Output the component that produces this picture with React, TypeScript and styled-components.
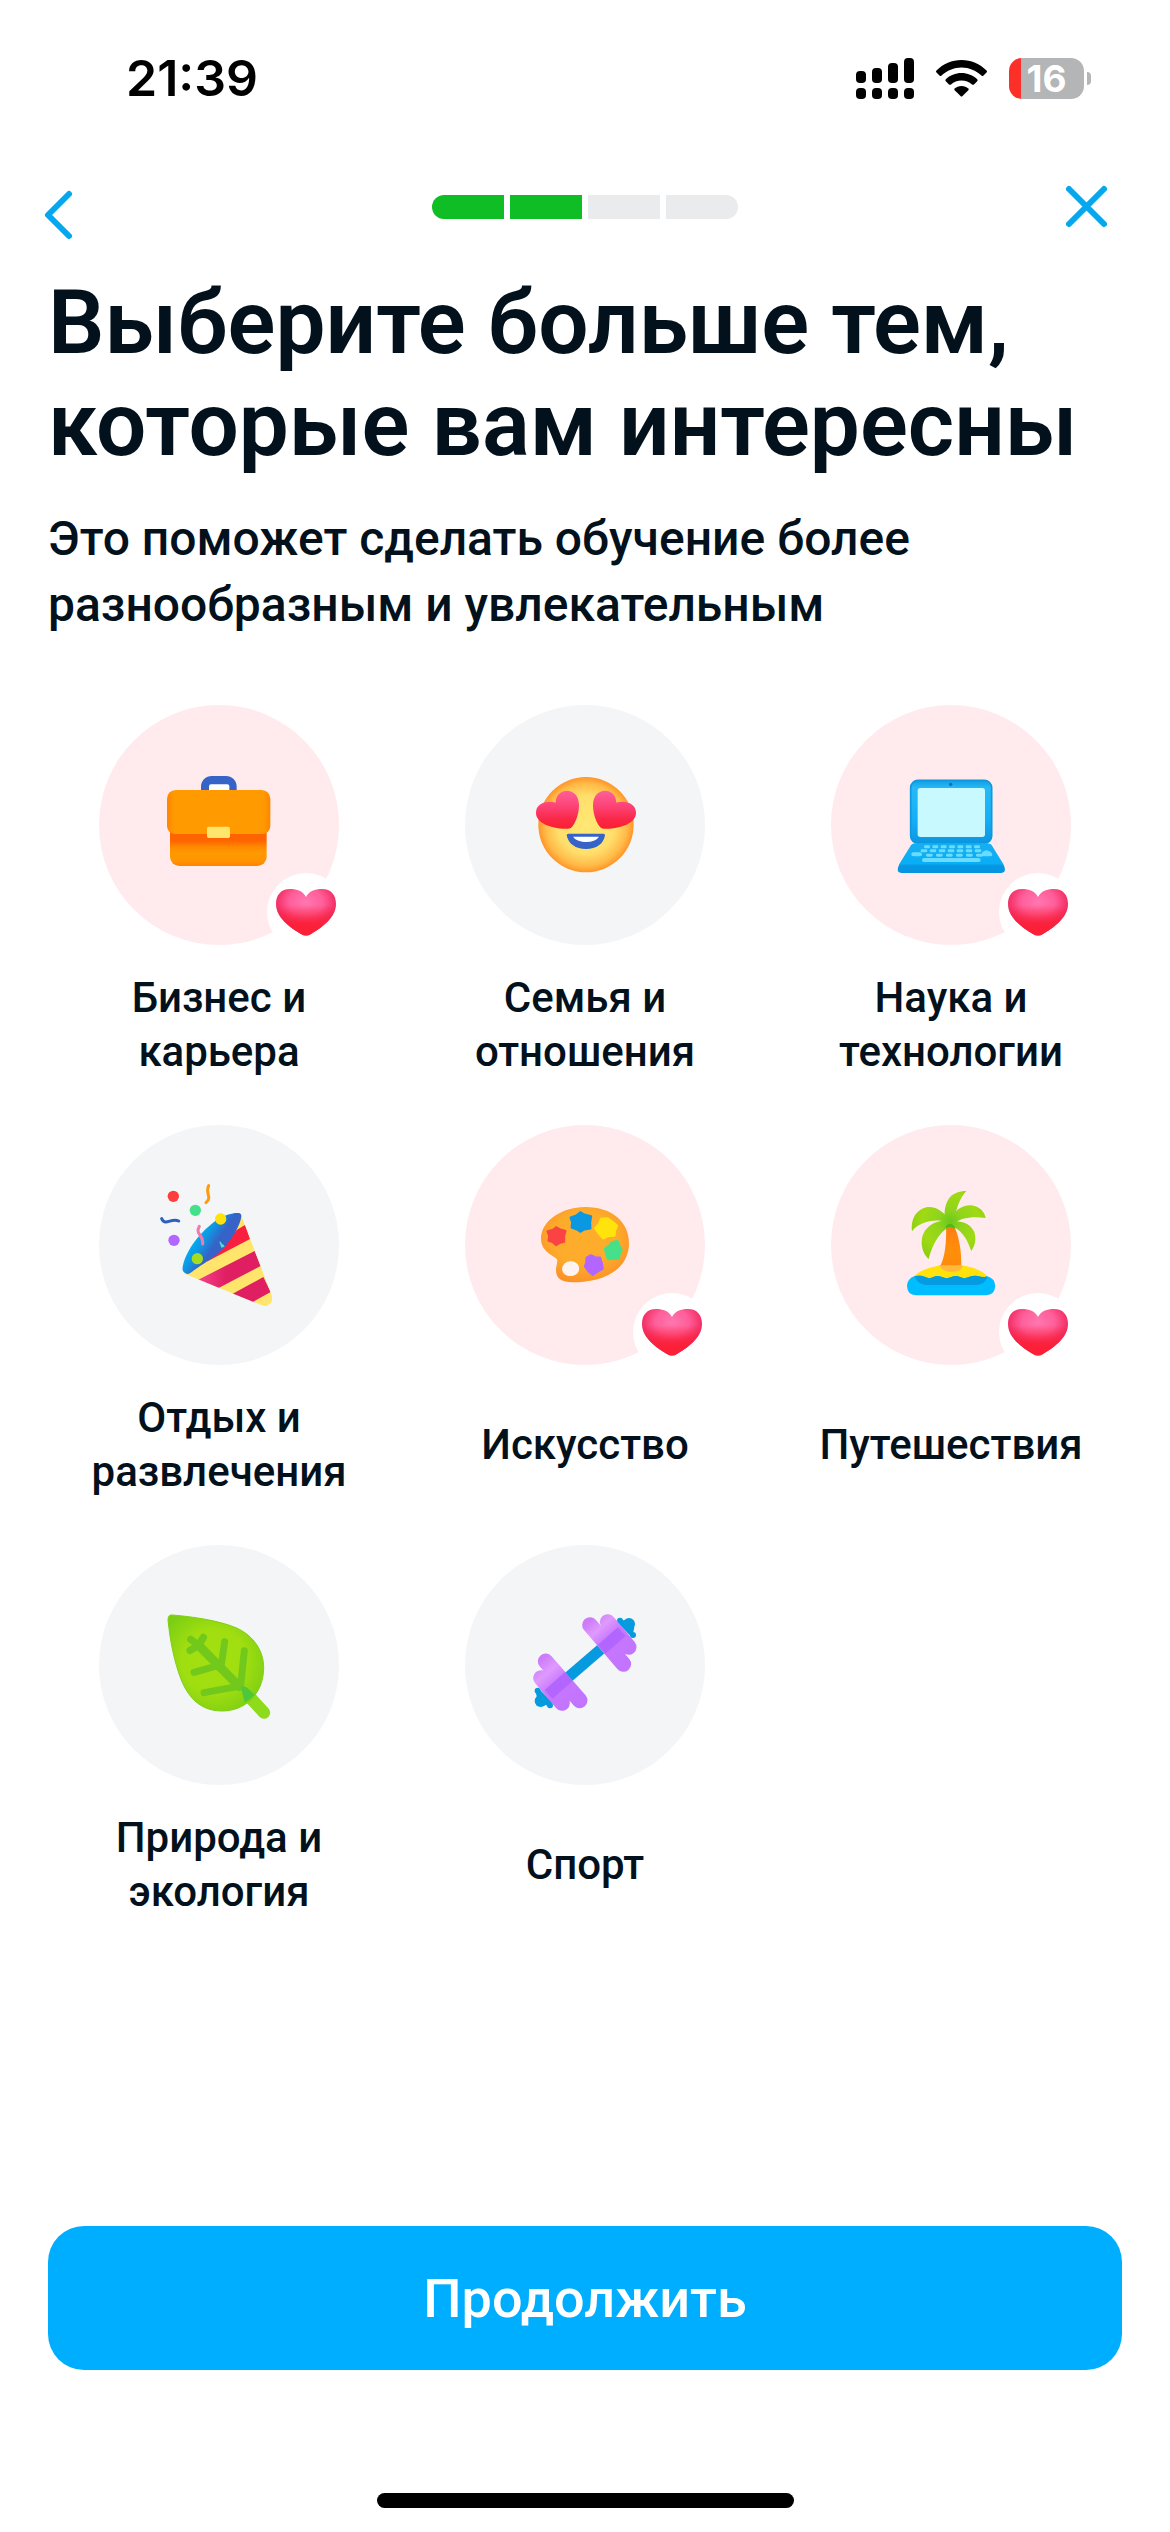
import React, { memo, useState } from "react";
import styled, { createGlobalStyle } from "styled-components";

interface ITopic {
    id: string;
    label: string;
    icon: React.ReactNode;
}

const BriefcaseIcon = () => (
    <svg viewBox="27 45 720 720" aria-hidden="true">
        <defs>
            <linearGradient id="caseTop" x1="0" x2="1" y1="0" y2="0">
                <stop offset="0" stopColor="#ff8500" />
                <stop offset="0.07" stopColor="#ff9a00" />
                <stop offset="0.93" stopColor="#ff9a00" />
                <stop offset="1" stopColor="#ff8500" />
            </linearGradient>
            <linearGradient id="caseBottom" x1="0" x2="0" y1="0" y2="1">
                <stop offset="0" stopColor="#ff6200" />
                <stop offset="0.4" stopColor="#ff6400" />
                <stop offset="0.56" stopColor="#ff8a00" />
                <stop offset="0.7" stopColor="#ff9a00" />
                <stop offset="0.88" stopColor="#ff9500" />
                <stop offset="1" stopColor="#ff8200" />
            </linearGradient>
        </defs>
        <path
            d="M333 304V290a32 32 0 0 1 32-32h43a32 32 0 0 1 32 32v14z"
            fill="#3563c8"
        />
        <path d="M357 300v-11q0-6 6-6h49q6 0 6 6v11z" fill="#fff" />
        <path
            d="M240 400H530V500a28 28 0 0 1-28 28H268a28 28 0 0 1-28-28z"
            fill="url(#caseBottom)"
        />
        <path
            d="M231 326a26 26 0 0 1 26-26h258a26 26 0 0 1 26 26v82a24 24 0 0 1-24 24H255a24 24 0 0 1-24-24z"
            fill="url(#caseTop)"
        />
        <rect x="351" y="410" width="69" height="34" rx="5" fill="#ffe56c" />
    </svg>
);

const LoveFaceIcon = () => (
    <svg viewBox="30 45 720 720" aria-hidden="true">
        <defs>
            <radialGradient id="face" cx="0.5" cy="0.5" r="0.5">
                <stop offset="0" stopColor="#ffe873" />
                <stop offset="0.6" stopColor="#ffdf6c" />
                <stop offset="0.86" stopColor="#ffbb49" />
                <stop offset="1" stopColor="#ff9527" />
            </radialGradient>
            <linearGradient id="eye" x1="0" x2="0" y1="0" y2="1">
                <stop offset="0" stopColor="#ff5f9a" />
                <stop offset="0.4" stopColor="#fc4476" />
                <stop offset="0.75" stopColor="#fa2747" />
                <stop offset="1" stopColor="#f9202f" />
            </linearGradient>
        </defs>
        <circle cx="393" cy="404" r="143" fill="url(#face)" />
        <path
            d="M302 338C303 290 372 288 372 346C372 374 360 402 350 412C346 417 334 417 322 416C288 413 243 400 243 368C243 340 276 330 302 338Z"
            fill="url(#eye)"
        />
        <path
            d="M484 338C483 290 414 288 414 346C414 374 426 402 436 412C440 417 452 417 464 416C498 413 543 400 543 368C543 340 510 330 484 338Z"
            fill="url(#eye)"
        />
        <path
            d="M340 431H445Q451 431 450 436C446 462 424 477 393 477C362 477 340 462 335 436Q335 431 340 431Z"
            fill="#3563c8"
        />
        <path
            d="M354 440H432C424 451 411 456 394 456C377 456 362 451 354 440Z"
            fill="#fff"
        />
    </svg>
);

const keyRows = [
    { y: 466, x: 312, w: 18, step: 25, count: 7 },
    { y: 478, x: 302, w: 20, step: 27, count: 7 },
    { y: 491, x: 318, w: 20, step: 30, count: 6 },
];

const LaptopIcon = () => (
    <svg viewBox="33 45 720 720" aria-hidden="true">
        <defs>
            <linearGradient id="lid" x1="0" x2="0" y1="0" y2="1">
                <stop offset="0" stopColor="#109ee2" />
                <stop offset="0.12" stopColor="#27b9f6" />
                <stop offset="0.6" stopColor="#16b0f6" />
                <stop offset="1" stopColor="#0b96e2" />
            </linearGradient>
            <linearGradient id="deck" x1="0" x2="0" y1="0" y2="1">
                <stop offset="0" stopColor="#18aef2" />
                <stop offset="0.68" stopColor="#08aef6" />
                <stop offset="0.76" stopColor="#0697e2" />
                <stop offset="1" stopColor="#0694e0" />
            </linearGradient>
        </defs>
        <rect x="272" y="271" width="243" height="189" rx="22" fill="url(#lid)" stroke="#0d98df" strokeWidth="5" />
        <rect x="293" y="294" width="202" height="147" rx="8" fill="#c7f9ff" />
        <circle cx="392" cy="283" r="5" fill="#1269b8" />
        <path
            d="M286 460H502Q512 460 518 470L550 522Q562 548 544 549H244Q226 548 238 522L270 470Q276 460 286 460Z"
            fill="url(#deck)"
        />
        <g fill="#69dcff">
            {keyRows.map((row) =>
                Array.from({ length: row.count }, (_, i) => (
                    <rect
                        key={`${row.y}-${i}`}
                        x={row.x + i * row.step}
                        y={row.y}
                        width={row.w}
                        height="9"
                        rx="4"
                    />
                ))
            )}
            <rect x="274" y="487" width="32" height="12" rx="6" />
            <path d="M484 499Q482 484 500 481Q514 484 517 494Q517 499 510 499Z" />
            <rect x="306" y="504" width="176" height="12" rx="6" />
        </g>
    </svg>
);

const PartyIcon = () => (
    <svg viewBox="27 45 720 720" aria-hidden="true">
        <defs>
            <linearGradient id="mouth" x1="320" x2="410" y1="370" y2="430" gradientUnits="userSpaceOnUse">
                <stop offset="0" stopColor="#00b0f6" />
                <stop offset="0.25" stopColor="#0c9be4" />
                <stop offset="0.6" stopColor="#3563c8" />
                <stop offset="1" stopColor="#3563c8" />
            </linearGradient>
            <linearGradient id="stripe" x1="330" x2="440" y1="0" y2="0" gradientUnits="userSpaceOnUse">
                <stop offset="0" stopColor="#f43f8c" />
                <stop offset="0.7" stopColor="#e01f62" />
                <stop offset="1" stopColor="#e01f62" />
            </linearGradient>
            <clipPath id="cone">
                <path d="M452 312L545 556Q550 572 540 581Q530 590 516 586L286 492Q370 440 400 400Q440 360 452 312Z" />
            </clipPath>
        </defs>
        <g clipPath="url(#cone)">
            <rect x="270" y="300" width="290" height="300" fill="#ffe56c" />
            <path d="M350 455L440 360L466 344L480 387Z" fill="#f9203f" />
            <path d="M300 522L494 423L512 468L370 542Z" fill="url(#stripe)" />
            <path d="M420 556L520 501L542 546L470 586Z" fill="#e01f62" />
        </g>
        <path
            d="M446 309Q454 310 454 318C452 344 424 396 382 432C352 456 322 472 300 490Q292 494 286 490Q274 484 279 466C290 420 330 364 384 328C408 313 432 307 446 309Z"
            fill="url(#mouth)"
        />
        <circle cx="250" cy="259" r="17" fill="#fc3f3d" />
        <circle cx="316" cy="301" r="17" fill="#45e08b" />
        <circle cx="252" cy="391" r="17" fill="#b266ff" />
        <circle cx="392" cy="327" r="17" fill="#ffe20c" />
        <circle cx="322" cy="446" r="17" fill="#a4dd20" />
        <g fill="none" strokeWidth="9" strokeLinecap="round">
            <path d="M356 227C344 250 368 262 348 278" stroke="#ff9a10" />
            <path d="M215 326C226 350 244 322 266 333" stroke="#2c5fbe" />
            <path d="M328 349C314 374 342 374 338 402" stroke="#ef7ab0" />
        </g>
        <path d="M388 394Q394 394 396 402Q402 402 404 410L394 413Q390 404 388 394Z" fill="#52dcd2" />
    </svg>
);

const PaletteIcon = () => (
    <svg viewBox="30 45 720 720" aria-hidden="true">
        <defs>
            <radialGradient id="board" cx="0.5" cy="0.42" r="0.6">
                <stop offset="0" stopColor="#feae2b" />
                <stop offset="0.6" stopColor="#fdab2b" />
                <stop offset="1" stopColor="#fb9128" />
            </radialGradient>
        </defs>
        <path
            fillRule="evenodd"
            d="M390 291C468 290 522 335 522 398C522 474 454 517 352 517C322 517 304 506 303 484C302 468 309 458 306 448C302 438 258 428 258 386C258 332 320 292 390 291ZM347 455C331 455 322 466 322 478C322 490 331 498 346 498C362 498 372 488 372 475C372 463 363 455 347 455Z"
            fill="url(#board)"
        />
        <ellipse cx="347" cy="476" rx="25" ry="22" fill="#fff3f2" />
        <g strokeWidth="7" strokeLinejoin="round">
            <path d="M303 352L314 358L331 363L327 379L327 395L313 399L303 405L293 396L281 392L283 378L278 364L294 360Z" fill="#fb4343" stroke="#fb4343" />
            <path d="M376 307L388 314L408 319L405 337L406 355L388 358L376 365L366 358L350 352L352 337L347 323L364 317Z" fill="#0a98e2" stroke="#0a98e2" />
            <path d="M458 325L470 334L486 347L480 361L478 377L459 378L444 385L434 373L420 355L432 343L438 327Z" fill="#ffe30c" stroke="#ffe30c" />
            <path d="M487 393L493 408L500 420L494 431L491 446L475 446L459 447L454 431L450 416L462 408L471 397Z" fill="#45e088" stroke="#45e088" />
            <path d="M408 436L420 442L435 443L440 459L443 476L430 483L413 494L400 483L390 469L394 459L395 443Z" fill="#b266ff" stroke="#b266ff" />
        </g>
    </svg>
);

const IslandIcon = () => (
    <svg viewBox="33 45 720 720" aria-hidden="true">
        <defs>
            <linearGradient id="trunk" x1="0" x2="0" y1="0" y2="1">
                <stop offset="0" stopColor="#ff7d14" />
                <stop offset="0.6" stopColor="#ff8f08" />
                <stop offset="1" stopColor="#ff8a0c" />
            </linearGradient>
            <radialGradient id="palm" cx="390" cy="335" r="120" gradientUnits="userSpaceOnUse">
                <stop offset="0" stopColor="#6cc81c" />
                <stop offset="0.3" stopColor="#8fd41c" />
                <stop offset="0.7" stopColor="#9fda14" />
                <stop offset="1" stopColor="#8ed010" />
            </radialGradient>
        </defs>
        <path d="M282 500C300 478 345 464 394 464C443 464 485 478 503 500L490 520H296Z" fill="#ffe20c" />
        <path d="M358 466Q392 461 428 467Q424 485 394 486Q364 485 358 466Z" fill="#ffb73c" />
        <path d="M378 352H404C420 388 424 430 424 466H362C374 440 380 400 378 352Z" fill="url(#trunk)" />
        <path
            d="M284 498Q300 494 316 501Q328 508 340 501Q352 495 366 501Q380 508 394 501Q408 495 420 501Q433 508 446 501Q462 495 474 498Q490 506 500 498Q524 504 526 528Q524 555 498 556H288Q262 555 261 528Q262 506 284 498Z"
            fill="#00bdff"
        />
        <path
            d="M284 499Q300 494 316 501Q328 508 340 501Q352 495 366 501Q380 508 394 501Q408 495 420 501Q433 508 446 501Q462 495 474 498Q490 502 502 500Q496 522 470 525H316Q292 522 284 499Z"
            fill="#049be0"
        />
        <g fill="url(#palm)">
            <path d="M388 346C366 330 372 282 390 262C402 247 424 243 439 243C420 262 408 300 402 330Z" />
            <path d="M384 344C370 322 300 330 276 364C272 330 286 298 322 291C350 288 374 308 386 328Z" />
            <path d="M388 336C400 300 430 284 454 286C482 290 494 308 497 324C460 318 420 322 402 342Z" />
            <path d="M386 352C352 372 336 410 326 447C300 424 298 376 322 354C342 332 372 328 392 338Z" />
            <path d="M386 336C420 328 452 340 463 366C470 390 464 408 454 423C444 396 432 366 400 350Z" />
        </g>
        <path d="M376 354Q380 341 391 341Q402 342 406 356Q391 350 376 354Z" fill="#4eb81e" />
    </svg>
);

const LeafIcon = () => (
    <svg viewBox="27 45 720 720" aria-hidden="true">
        <defs>
            <radialGradient id="leaf" cx="0.48" cy="0.48" r="0.6">
                <stop offset="0" stopColor="#a4e010" />
                <stop offset="0.55" stopColor="#a0de10" />
                <stop offset="1" stopColor="#7cce14" />
            </radialGradient>
        </defs>
        <path d="M480 502L522 548" stroke="#8edb1c" strokeWidth="37" strokeLinecap="round" />
        <path
            d="M246 255C310 260 388 272 440 294C492 318 522 364 521 416C519 492 466 543 396 543C338 543 298 510 274 450C252 394 240 330 234 270Q234 254 246 255Z"
            fill="url(#leaf)"
            stroke="#7fd010"
            strokeWidth="3"
        />
        <g stroke="#72c91c" fill="none" strokeLinecap="round">
            <path d="M326 346L448 470" strokeWidth="27" />
            <path d="M302 328L326 346L300 361M326 346L340 322" strokeWidth="22" />
            <path d="M404 335L394 404L312 427M463 362L452 468L342 488" strokeWidth="21" strokeLinejoin="round" />
        </g>
        <path d="M452 468L470 472L494 494Q480 510 464 517Q458 494 452 468Z" fill="#4ec838" />
    </svg>
);

const DumbbellIcon = () => (
    <svg viewBox="30 45 720 720" aria-hidden="true">
        <defs>
            <linearGradient id="plateRight" x1="405" x2="520" y1="270" y2="400" gradientUnits="userSpaceOnUse">
                <stop offset="0" stopColor="#ce7bfb" />
                <stop offset="0.22" stopColor="#df9afd" />
                <stop offset="0.45" stopColor="#c877fd" />
                <stop offset="1" stopColor="#c274ff" />
            </linearGradient>
            <linearGradient id="plateLeft" x1="255" x2="370" y1="390" y2="520" gradientUnits="userSpaceOnUse">
                <stop offset="0" stopColor="#cd7bfb" />
                <stop offset="0.25" stopColor="#df9afd" />
                <stop offset="0.5" stopColor="#c877fd" />
                <stop offset="1" stopColor="#c274ff" />
            </linearGradient>
        </defs>
        <g fill="#069adf">
            <path d="M487 277L500 270L520 272L538 290L532 324Z" />
            <circle cx="495" cy="272" r="9" />
            <circle cx="522" cy="282" r="18" />
            <circle cx="534" cy="315" r="9" />
            <path d="M242 486L252 476L294 520L282 528L250 520Z" />
            <circle cx="248" cy="482" r="9" />
            <circle cx="257" cy="513" r="18" />
            <circle cx="285" cy="526" r="9" />
        </g>
        <g fill="none" strokeLinecap="round" strokeWidth="47">
            <path d="M458 276L521 351M405 285L505 402" stroke="url(#plateRight)" />
            <path d="M258 444L321 519M272 394L374 511" stroke="url(#plateLeft)" />
        </g>
        <path d="M440 358L500 305" stroke="#b266ff" strokeWidth="35" />
        <path d="M281 493L341 440" stroke="#b266ff" strokeWidth="35" />
        <path d="M342 440L437 358" stroke="#069adf" strokeWidth="33" />
    </svg>
);

const HEART_PATH =
    "M39 24C42 18 48 16 55 16C64 16 69 22 69 31C69 45 54 55 44 61Q39 64 34 61C24 55 9 45 9 31C9 22 14 16 23 16C30 16 36 18 39 24Z";

const HeartIcon = () => (
    <svg viewBox="0 0 78 78" aria-hidden="true">
        <defs>
            <radialGradient id="heartGloss" cx="0.5" cy="0.28" r="0.62">
                <stop offset="0" stopColor="#ff77b0" />
                <stop offset="0.45" stopColor="#ff5f9a" />
                <stop offset="0.75" stopColor="#f5356c" />
                <stop offset="1" stopColor="#dc1f62" />
            </radialGradient>
            <linearGradient id="heartTip" x1="0" x2="0" y1="0" y2="1">
                <stop offset="0.35" stopColor="#fb2038" stopOpacity="0" />
                <stop offset="0.8" stopColor="#fb2038" />
            </linearGradient>
        </defs>
        <path d={HEART_PATH} fill="url(#heartGloss)" />
        <path d={HEART_PATH} fill="url(#heartTip)" />
    </svg>
);

const topics: ITopic[] = [
    { id: "business", label: "Бизнес и карьера", icon: <BriefcaseIcon /> },
    { id: "family", label: "Семья и отношения", icon: <LoveFaceIcon /> },
    { id: "science", label: "Наука и технологии", icon: <LaptopIcon /> },
    { id: "leisure", label: "Отдых и развлечения", icon: <PartyIcon /> },
    { id: "art", label: "Искусство", icon: <PaletteIcon /> },
    { id: "travel", label: "Путешествия", icon: <IslandIcon /> },
    { id: "nature", label: "Природа и экология", icon: <LeafIcon /> },
    { id: "sport", label: "Спорт", icon: <DumbbellIcon /> },
];

const TOTAL_STEPS = 4;

const StatusBar = memo(() => (
    <StatusWrapper>
        <Time>21:39</Time>
        <StatusIcons>
            <svg width="58" height="41" viewBox="0 0 58 41" aria-hidden="true">
                <rect x="0" y="13" width="10" height="12" rx="4" />
                <rect x="16" y="10" width="10" height="15" rx="4" />
                <rect x="32" y="5" width="10" height="20" rx="4" />
                <rect x="48" y="0" width="10" height="25" rx="4" />
                <rect x="0" y="30" width="10" height="11" rx="4" />
                <rect x="16" y="30" width="10" height="11" rx="4" />
                <rect x="32" y="30" width="10" height="11" rx="4" />
                <rect x="48" y="30" width="10" height="11" rx="4" />
            </svg>
            <svg width="51" height="37" viewBox="0 0 51 37" aria-hidden="true">
                <path d="M25.500 0C35 0 44 4 50.500 10.500Q51.500 11.500 50.500 12.500L47.500 15.500Q46.500 16.500 45.500 15.500C40 10.500 33 7.500 25.500 7.500S11 10.500 5.500 15.500Q4.500 16.500 3.500 15.500L.5 12.500Q-.5 11.500.5 10.500C7 4 16 0 25.500 0Z" />
                <path d="M25.500 13C31.500 13 37 15.300 41.200 19.200Q42.200 20.200 41.200 21.200L38 24.400Q37 25.300 36 24.400C33.200 21.900 29.500 20.400 25.500 20.400S17.800 21.900 15 24.400Q14 25.300 13 24.400L9.800 21.200Q8.800 20.200 9.800 19.200C14 15.300 19.500 13 25.500 13Z" />
                <path d="M25.500 26C28.300 26 30.500 26.900 32.300 28.400Q33.200 29.300 32.300 30.200L26.500 36Q25.500 37 24.500 36L18.700 30.200Q17.800 29.300 18.700 28.400C20.500 26.900 22.700 26 25.500 26Z" />
            </svg>
            <Battery>
                <BatteryBody>16</BatteryBody>
                <BatteryCap />
            </Battery>
        </StatusIcons>
    </StatusWrapper>
));

const Topic: React.FC<{
    topic: ITopic;
    isSelected: boolean;
    onToggle: (id: string) => void;
}> = memo(({ topic, isSelected, onToggle }) => (
    <TopicButton
        type="button"
        aria-pressed={isSelected}
        onClick={() => onToggle(topic.id)}
    >
        <TopicCircle $isSelected={isSelected}>
            {topic.icon}
            {isSelected && (
                <HeartBadge>
                    <HeartIcon />
                </HeartBadge>
            )}
        </TopicCircle>
        <TopicLabel>{topic.label}</TopicLabel>
    </TopicButton>
));

export default function App() {
    const [selected, setSelected] = useState<string[]>([
        "business",
        "science",
        "art",
        "travel",
    ]);
    const step = 2;

    const handleToggle = (id: string) => {
        setSelected((prev) =>
            prev.includes(id) ? prev.filter((x) => x !== id) : [...prev, id]
        );
    };

    return (
        <>
            <GlobalStyle />
            <Screen>
                <StatusBar />
                <Header>
                    <IconButton type="button" aria-label="Назад">
                        <svg viewBox="0 0 72 72" aria-hidden="true">
                            <path d="M33 23L12 44L33 65" />
                        </svg>
                    </IconButton>
                    <Progress
                        role="progressbar"
                        aria-label="Прогресс"
                        aria-valuemin={0}
                        aria-valuemax={TOTAL_STEPS}
                        aria-valuenow={step}
                    >
                        {Array.from({ length: TOTAL_STEPS }, (_, i) => (
                            <ProgressStep key={i} $isDone={i < step} />
                        ))}
                    </Progress>
                    <IconButton type="button" aria-label="Закрыть">
                        <svg viewBox="0 0 72 72" aria-hidden="true">
                            <path d="M7 18L42 53M42 18L7 53" />
                        </svg>
                    </IconButton>
                </Header>
                <Intro>
                    <Title>Выберите больше тем, которые вам интересны</Title>
                    <Subtitle>
                        Это поможет сделать обучение более разнообразным
                        и&nbsp;увлекательным
                    </Subtitle>
                </Intro>
                <TopicGrid>
                    {topics.map((topic) => (
                        <Topic
                            key={topic.id}
                            topic={topic}
                            isSelected={selected.includes(topic.id)}
                            onToggle={handleToggle}
                        />
                    ))}
                </TopicGrid>
                <Footer>
                    <ContinueButton type="button">Продолжить</ContinueButton>
                    <HomeIndicator />
                </Footer>
            </Screen>
        </>
    );
}

const GlobalStyle = createGlobalStyle`
    * {
        box-sizing: border-box;
    }

    body {
        margin: 0;
        background-color: #fff;
        color: #02111b;
        font-family: Roboto, "Noto Sans", sans-serif;
    }

    button {
        padding: 0;
        border: 0;
        background: none;
        color: inherit;
        font: inherit;
        cursor: pointer;
    }

    svg {
        display: block;
    }
`;

const Screen = styled.main`
    min-height: 100vh;
    display: flex;
    flex-direction: column;
`;

const StatusWrapper = styled.div`
    height: 156px;
    padding: 0 79px 0 126px;
    display: flex;
    align-items: center;
    justify-content: space-between;
    color: #000;
    font-family: Inter, sans-serif;
`;

const Time = styled.div`
    font-size: 50px;
    font-weight: 600;
    line-height: 60px;
`;

const StatusIcons = styled.div`
    display: flex;
    align-items: center;
    gap: 22px;
`;

const Battery = styled.div`
    display: flex;
    align-items: center;
    gap: 3px;
`;

const BatteryBody = styled.div`
    width: 75px;
    height: 41px;
    border-radius: 13px;
    background: linear-gradient(to right, #fc3028 12px, #b3b5b6 12px);
    color: #fff;
    font-size: 37px;
    font-weight: 700;
    line-height: 41px;
    text-align: center;
`;

const BatteryCap = styled.div`
    width: 4px;
    height: 13px;
    border-radius: 0 4px 4px 0;
    background-color: #b3b5b6;
`;

const Header = styled.header`
    height: 102px;
    padding: 0 36px;
    display: flex;
    align-items: center;
    justify-content: space-between;
`;

const IconButton = styled.button`
    width: 72px;
    height: 72px;

    path {
        fill: none;
        stroke: #05a8ee;
        stroke-width: 6;
        stroke-linecap: round;
        stroke-linejoin: round;
    }
`;

const Progress = styled.div`
    display: flex;
    gap: 6px;
    border-radius: 12px;
    overflow: hidden;
`;

const ProgressStep = styled.div<{ $isDone: boolean }>`
    width: 72px;
    height: 24px;
    background-color: ${(p) => (p.$isDone ? "#0fbd25" : "#e9ebec")};
`;

const Intro = styled.section`
    padding: 14px 48px 0;
`;

const Title = styled.h1`
    margin: 0;
    font-size: 89px;
    font-weight: 600;
    line-height: 102px;
`;

const Subtitle = styled.p`
    margin: 30px 0 0;
    font-size: 48px;
    font-weight: 500;
    line-height: 66px;
`;

const TopicGrid = styled.section`
    padding: 67px 36px 48px;
    display: grid;
    grid-template-columns: repeat(3, 1fr);
    gap: 46px 0;
`;

const TopicButton = styled.button`
    display: flex;
    flex-direction: column;
    align-items: center;
    gap: 26px;
`;

const TopicCircle = styled.span<{ $isSelected: boolean }>`
    position: relative;
    width: 240px;
    height: 240px;
    border-radius: 50%;
    background-color: ${(p) => (p.$isSelected ? "#ffebed" : "#f3f5f7")};
`;

const HeartBadge = styled.span`
    position: absolute;
    right: -6px;
    bottom: -6px;
    width: 78px;
    height: 78px;
    border-radius: 50%;
    background-color: #fff;
`;

const TopicLabel = styled.span`
    max-width: 280px;
    min-height: 108px;
    display: flex;
    align-items: center;
    font-size: 42px;
    font-weight: 500;
    line-height: 54px;
    text-align: center;
`;

const Footer = styled.footer`
    margin-top: auto;
    padding: 0 48px 24px;
    display: flex;
    flex-direction: column;
    align-items: center;
    gap: 123px;
`;

const ContinueButton = styled.button`
    width: 100%;
    height: 144px;
    border-radius: 36px;
    background-color: #00aeff;
    color: #fff;
    font-size: 54px;
    font-weight: 500;
`;

const HomeIndicator = styled.div`
    width: 417px;
    height: 15px;
    border-radius: 8px;
    background-color: #000;
`;
